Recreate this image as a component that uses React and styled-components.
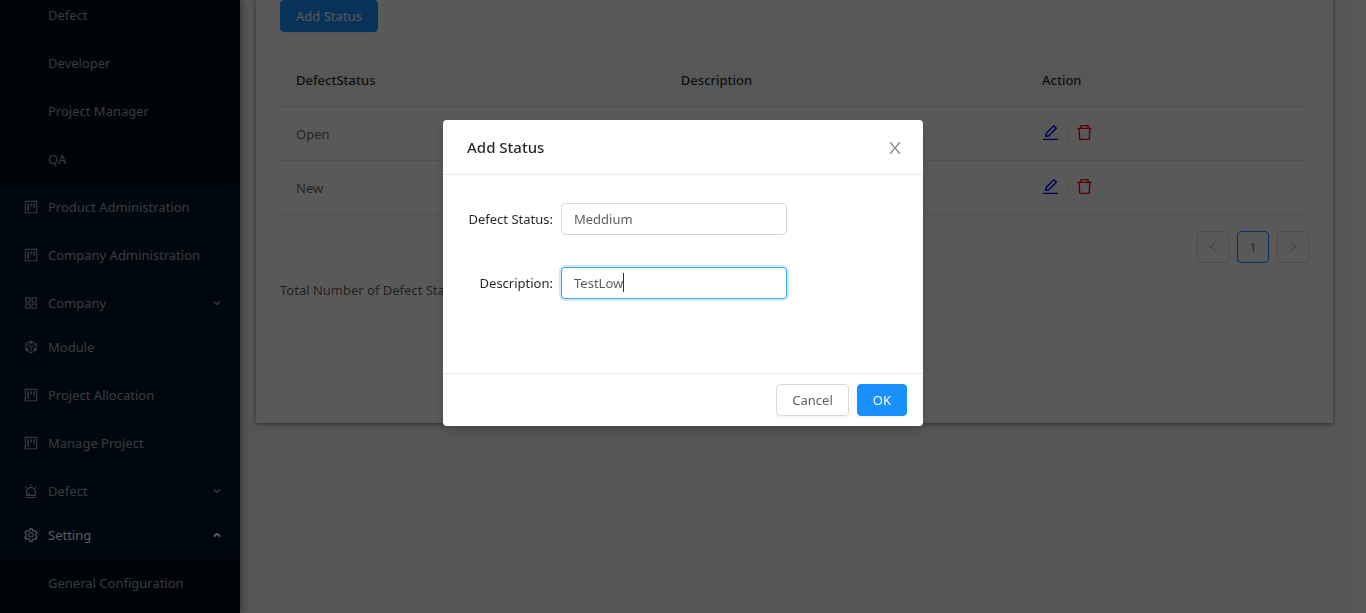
import React from 'react';
import styled, { createGlobalStyle } from 'styled-components';
import {
  AiOutlineProject,
  AiOutlineAppstore,
  AiOutlineCodeSandbox,
  AiOutlineAlert,
  AiOutlineSetting,
  AiOutlineEdit,
  AiOutlineDelete,
  AiOutlineLeft,
  AiOutlineRight,
} from 'react-icons/ai';

const GlobalStyle = createGlobalStyle`
  *, *::before, *::after { box-sizing: border-box; }
  body {
    margin: 0;
    overflow: hidden;
    background: #f0f2f5;
    color: rgba(0, 0, 0, 0.65);
    font: 400 13px/22px "Noto Sans", "Open Sans", sans-serif;
  }
  button, input { font: inherit; }
`;

const Layout = styled.div`
  display: flex;
  height: 100vh;
  overflow: hidden;
`;

const Sidebar = styled.nav`
  display: flex;
  flex: 0 0 240px;
  flex-direction: column;
  overflow: hidden;
  background: #001529;
  box-shadow: 2px 0 6px rgba(0, 21, 41, 0.35);
  z-index: 1;
`;

const MenuList = styled.ul`
  margin: 0;
  padding: 0 0 ${(p) => (p.$main ? 4 : 0)}px;
  list-style: none;
`;

/* The menu is scrolled a little past the top of the role entries. */
const SubMenu = styled(MenuList)`
  flex: ${(p) => (p.$scrolled ? 'none' : '1')};
  margin-top: ${(p) => (p.$scrolled ? '-9px' : '0')};
  background: #000c17;
  box-shadow: inset 0 2px 8px rgba(0, 0, 0, 0.45);
`;

const MenuItem = styled.li`
  padding: 4px 0 ${(p) => (p.$group ? 0 : 4)}px;
`;

const MenuLink = styled.a`
  display: flex;
  align-items: center;
  height: 40px;
  padding: 0 16px 0 ${(p) => (p.$nested ? 48 : 24)}px;
  color: ${(p) => (p.$active ? '#fff' : 'rgba(255, 255, 255, 0.65)')};
  text-decoration: none;
  svg { width: 14px; height: 14px; margin-right: 10px; }
`;

const Chevron = styled.i`
  position: relative;
  width: 8px;
  height: 6px;
  margin-left: auto;
  margin-right: 3px;
  opacity: ${(p) => (p.$open ? 1 : 0.7)};
  transform: ${(p) => (p.$open ? 'rotate(180deg)' : 'none')};
  &::before, &::after {
    content: '';
    position: absolute;
    top: 2px;
    width: 5px;
    height: 2px;
    border-radius: 2px;
    background: currentColor;
  }
  &::before { left: 0; transform: rotate(45deg); }
  &::after { right: 0; transform: rotate(-45deg); }
`;

const Content = styled.main`
  flex: 1;
  min-width: 0;
  padding: 0 16px;
`;

const ScrollTrack = styled.div`
  flex: 0 0 17px;
  background: #fafafa;
`;

const Card = styled.section`
  min-height: 423px;
  padding: 0 24px;
  background: #fff;
  box-shadow: 0 1px 4px rgba(0, 21, 41, 0.5);
`;

const Button = styled.button`
  height: 32px;
  padding: 0 15px;
  border: 1px solid ${(p) => (p.$primary ? '#1890ff' : '#d9d9d9')};
  border-radius: 4px;
  background: ${(p) => (p.$primary ? '#1890ff' : '#fff')};
  color: ${(p) => (p.$primary ? '#fff' : 'rgba(0, 0, 0, 0.65)')};
  box-shadow: 0 2px 0 rgba(0, 0, 0, 0.03);
`;

const Table = styled.table`
  width: 100%;
  margin-top: 21px;
  border-collapse: separate;
  border-spacing: 0;
  table-layout: fixed;
  th, td {
    height: 54px;
    padding: 0 16px;
    border-bottom: 1px solid #e8e8e8;
    text-align: left;
  }
  th {
    background: #fafafa;
    color: rgba(0, 0, 0, 0.85);
    font-weight: 500;
  }
`;

const StatusColumn = styled.col`
  width: 37.4%;
`;

const DescriptionColumn = styled.col`
  width: 35.1%;
`;

const Actions = styled.div`
  display: flex;
  align-items: center;
  margin-bottom: 2px;
`;

const IconButton = styled.button`
  display: flex;
  padding: 0;
  border: 0;
  background: none;
  color: ${(p) => p.$color};
  svg { width: 17px; height: 17px; }
`;

const Divider = styled.span`
  width: 1px;
  height: 13px;
  margin: 4px 8px 0;
  background: #e8e8e8;
`;

const Pagination = styled.nav`
  display: flex;
  justify-content: flex-end;
  gap: 8px;
  margin: 16px 0;
`;

const PageButton = styled.button`
  display: flex;
  align-items: center;
  justify-content: center;
  width: 32px;
  height: 32px;
  padding: 0;
  border: 1px solid ${(p) => (p.$current ? '#1890ff' : '#d9d9d9')};
  border-radius: 4px;
  background: #fff;
  color: ${(p) => (p.$current ? '#1890ff' : 'rgba(0, 0, 0, 0.25)')};
  svg { width: 12px; height: 12px; }
`;

const Total = styled.p`
  margin: 0;
`;

const Mask = styled.div`
  position: fixed;
  inset: 0;
  z-index: 10;
  display: flex;
  align-items: flex-start;
  justify-content: center;
  padding-top: 120px;
  background: rgba(0, 0, 0, 0.65);
`;

const Dialog = styled.section`
  width: 480px;
  border-radius: 4px;
  background: #fff;
  box-shadow: 0 4px 12px rgba(0, 0, 0, 0.15);
`;

const DialogHeader = styled.header`
  display: flex;
  align-items: center;
  justify-content: space-between;
  height: 55px;
  padding: 0 20px 0 24px;
  border-bottom: 1px solid #e8e8e8;
`;

const DialogTitle = styled.h2`
  margin: 0;
  color: rgba(0, 0, 0, 0.85);
  font-size: 15px;
  font-weight: 500;
`;

const CloseButton = styled(IconButton)`
  padding-top: 2px;
  svg { width: 16px; height: 16px; }
`;

const Form = styled.form`
  display: grid;
  grid-template-columns: 86px 226px;
  column-gap: 8px;
  row-gap: 32px;
  min-height: 198px;
  padding: 28px 24px;
  align-content: start;
`;

const Label = styled.label`
  color: rgba(0, 0, 0, 0.85);
  line-height: 32px;
  text-align: right;
  white-space: nowrap;
`;

const Field = styled.div`
  position: relative;
`;

const Input = styled.input`
  display: block;
  width: 100%;
  height: 32px;
  padding: 4px 12px;
  border: 1px solid #d9d9d9;
  border-radius: 4px;
  outline: 0;
  background: #fff;
  color: rgba(0, 0, 0, 0.65);
  caret-color: transparent;
  &:focus {
    border-color: #40a9ff;
    box-shadow: 0 0 0 2px rgba(24, 144, 255, 0.2);
  }
`;

const Caret = styled.span`
  position: absolute;
  top: 6px;
  left: 62px;
  width: 1px;
  height: 19px;
  background: #333;
`;

const DialogFooter = styled.footer`
  display: flex;
  justify-content: flex-end;
  gap: 8px;
  padding: 10px 16px;
  border-top: 1px solid #e8e8e8;
`;

const iconBox = '64 64 896 896';

const CloseIcon = () => (
  <svg viewBox={iconBox} fill="currentColor" aria-hidden="true">
    <path d="M563.8 512l262.5-312.9c4.4-5.2.7-13.1-6.1-13.1h-79.8c-4.7 0-9.2 2.1-12.3 5.7L511.6 449.8 295.1 191.7c-3-3.6-7.5-5.7-12.3-5.7H203c-6.8 0-10.5 7.9-6.1 13.1L459.4 512 196.9 824.9A7.95 7.95 0 0 0 203 838h79.8c4.7 0 9.2-2.1 12.3-5.7l216.5-258.1 216.5 258.1c3 3.6 7.5 5.7 12.3 5.7h79.8c6.8 0 10.5-7.9 6.1-13.1L563.8 512z" />
  </svg>
);

const roles = ['Defect', 'Developer', 'Project Manager', 'QA'];

const sections = [
  { label: 'Product Administration', icon: AiOutlineProject },
  { label: 'Company Administration', icon: AiOutlineProject },
  { label: 'Company', icon: AiOutlineAppstore, group: true },
  { label: 'Module', icon: AiOutlineCodeSandbox },
  { label: 'Project Allocation', icon: AiOutlineProject },
  { label: 'Manage Project', icon: AiOutlineProject },
  { label: 'Defect', icon: AiOutlineAlert, group: true },
  { label: 'Setting', icon: AiOutlineSetting, group: true, open: true },
];

const NestedItems = ({ items, scrolled }) => (
  <SubMenu $scrolled={scrolled}>
    {items.map((label) => (
      <MenuItem key={label}>
        <MenuLink href="#" $nested>{label}</MenuLink>
      </MenuItem>
    ))}
  </SubMenu>
);

const StatusRow = ({ name }) => (
  <tr>
    <td>{name}</td>
    <td />
    <td>
      <Actions>
        <IconButton $color="blue" aria-label={`Edit ${name}`}>
          <AiOutlineEdit viewBox={iconBox} />
        </IconButton>
        <Divider />
        <IconButton $color="red" aria-label={`Delete ${name}`}>
          <AiOutlineDelete viewBox={iconBox} />
        </IconButton>
      </Actions>
    </td>
  </tr>
);

export default function App() {
  return (
    <>
      <GlobalStyle />
      <Layout>
        <Sidebar>
          <NestedItems items={roles} scrolled />
          <MenuList $main>
            {sections.map(({ label, icon: Icon, group, open }) => (
              <MenuItem key={label} $group={group}>
                <MenuLink href="#" $active={open}>
                  <Icon viewBox={iconBox} />
                  {label}
                  {group && <Chevron $open={open} />}
                </MenuLink>
              </MenuItem>
            ))}
          </MenuList>
          <NestedItems items={['General Configuration']} />
        </Sidebar>
        <Content>
          <Card>
            <Button $primary>Add Status</Button>
            <Table>
              <colgroup>
                <StatusColumn />
                <DescriptionColumn />
                <col />
              </colgroup>
              <thead>
                <tr><th>DefectStatus</th><th>Description</th><th>Action</th></tr>
              </thead>
              <tbody>
                <StatusRow name="Open" />
                <StatusRow name="New" />
              </tbody>
            </Table>
            <Pagination>
              <PageButton aria-label="Previous page"><AiOutlineLeft viewBox={iconBox} /></PageButton>
              <PageButton $current>1</PageButton>
              <PageButton aria-label="Next page"><AiOutlineRight viewBox={iconBox} /></PageButton>
            </Pagination>
            <Total>Total Number of Defect Status: 2</Total>
          </Card>
        </Content>
        <ScrollTrack />
      </Layout>
      <Mask>
        <Dialog role="dialog" aria-labelledby="dialog-title">
          <DialogHeader>
            <DialogTitle id="dialog-title">Add Status</DialogTitle>
            <CloseButton $color="rgba(0, 0, 0, 0.45)" aria-label="Close"><CloseIcon /></CloseButton>
          </DialogHeader>
          <Form>
            <Label htmlFor="status">Defect Status:</Label>
            <Field>
              <Input id="status" defaultValue="Meddium" />
            </Field>
            <Label htmlFor="description">Description:</Label>
            <Field>
              <Input id="description" defaultValue="TestLow" autoFocus />
              <Caret />
            </Field>
          </Form>
          <DialogFooter>
            <Button>Cancel</Button>
            <Button $primary>OK</Button>
          </DialogFooter>
        </Dialog>
      </Mask>
    </>
  );
}
